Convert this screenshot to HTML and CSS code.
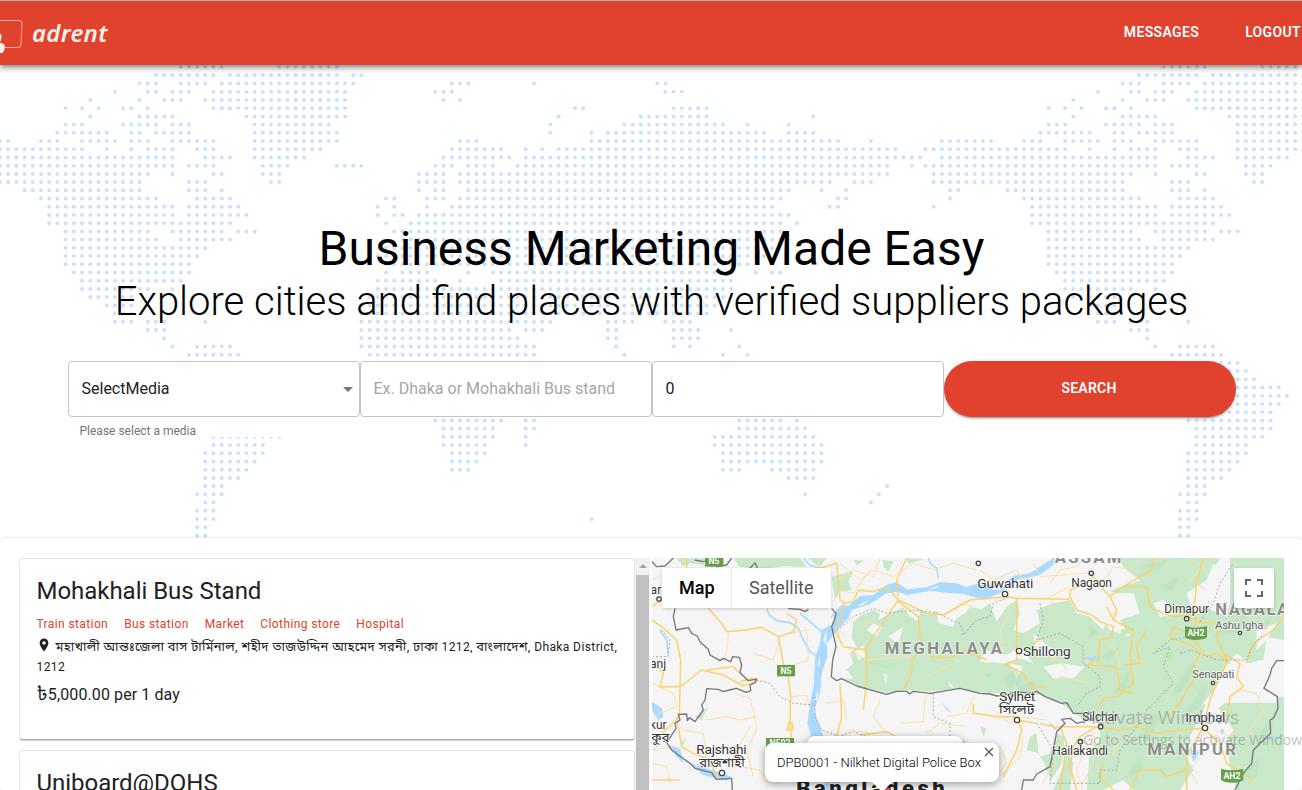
FILE: index.html
```html
<!DOCTYPE html>
<html lang="en">
<head>
<meta charset="utf-8">
<title>adrent</title>
<link rel="stylesheet" href="styles.css">
</head>
<body>
<header class="topbar">
  <div class="brand">
    <svg class="brand-icon" width="24" height="40" viewBox="0 0 24 40" fill="none">
      <path d="M-4 4.500H18.500Q22 4.500 22 7L21 29Q20.500 31.500 18 31.500H5" stroke="#fff" stroke-opacity=".55"/>
      <path d="M0 17.500Q2 19 1.500 21.500L0 27Q5 27 4.800 31Q4.500 36 2 37L-4 37V17Z" fill="#fff" fill-opacity=".93"/>
    </svg>
    <span class="brand-name">adrent</span>
  </div>
  <nav class="nav"><a>MESSAGES</a><a>LOGOUT</a></nav>
</header>

<section class="hero">
  <svg class="dots" id="dots" width="1302" height="473" viewBox="0 65 1302 473"></svg>
  <h1 class="hero-title">Business Marketing Made Easy</h1>
  <h2 class="hero-sub">Explore cities and find places with verified suppliers packages</h2>
  <form class="search">
    <div class="cell filled">
      <div class="field">SelectMedia<i class="caret"></i></div>
      <p class="helper">Please select a media</p>
    </div>
    <div class="cell"><div class="field placeholder">Ex. Dhaka or Mohakhali Bus stand</div></div>
    <div class="cell"><div class="field">0</div></div>
    <div class="cell"><div class="search-btn">SEARCH</div></div>
  </form>
</section>

<main class="results">
  <div class="list">
    <div class="cards">
      <article class="card">
        <h3 class="card-title">Mohakhali Bus Stand</h3>
        <div class="tags"><span>Train station</span><span>Bus station</span><span>Market</span><span>Clothing store</span><span>Hospital</span></div>
        <p class="address"><svg class="pin" width="14" height="14" viewBox="0 0 24 24"><path fill="#212121" d="M12 1C7.600 1 4.500 4.400 4.500 8.500C4.500 14 12 23 12 23S19.500 14 19.500 8.500C19.500 4.400 16.400 1 12 1Zm0 10.500a3 3 0 1 1 0-6a3 3 0 0 1 0 6Z"/></svg><span class="bn">মহাখালী আন্তঃজেলা বাস টার্মিনাল, শহীদ তাজউদ্দিন আহমেদ সরনী, ঢাকা</span> 1212, <span class="bn">বাংলাদেশ,</span> Dhaka District,<br>1212</p>
        <p class="price"><span class="taka">৳</span>5,000.00 per 1 day</p>
      </article>
      <article class="card"><h3 class="card-title">Uniboard@DOHS</h3></article>
    </div>
    <div class="scrollbar"><i class="up"></i><div class="thumb"></div></div>
  </div>

  <div class="map">
    <svg class="map-art" width="632" height="232" viewBox="36 24 1896 696">
      <rect x="36" y="24" width="1896" height="696" fill="#f5f5f5"/>
      <g class="green">
        <path d="M110 24H195L190 45 150 40 130 50ZM280 24H480L500 50 430 48 370 60 300 50ZM500 24H560L540 50ZM575 80L640 62 625 95 635 120 600 125 585 150Z"/>
        <path d="M728 30L760 34 745 65 730 50ZM640 30L670 32 650 48ZM798 24L850 28 805 42Z"/>
        <path d="M640 215L665 195 700 180 720 192 715 210 750 190 790 172 800 190 835 215 840 180 860 195 890 185 895 220 940 230 950 205 975 190 990 172 1025 178 1050 160 1070 215 1100 170 1130 150 1140 190 1120 240 1150 250 1200 220 1190 180 1240 160 1290 150 1310 190 1350 200 1390 240 1400 200 1360 180 1400 165 1385 135 1440 110 1480 100 1500 90 1460 60 1430 24H1740L1700 100 1690 170 1760 200 1770 160 1770 24H1932V270L1880 260 1870 330 1860 410 1880 440 1932 440V720H1790L1770 650 1760 570 1780 540 1740 480 1700 460 1650 560 1640 620 1660 660 1620 720H1480L1450 690 1390 720H1340L1345 660 1350 600 1380 570 1380 520 1330 510 1300 485 1260 460 1210 435 1170 430 1060 430 1000 425 960 414 870 424 800 420 740 428 650 405 615 388 640 385 620 360 640 340 630 310 650 290 635 265Z"/>
        <path d="M1250 550L1275 560 1265 640 1235 690 1215 650ZM1280 600L1300 640 1290 720 1240 720 1265 660Z"/>
        <path d="M165 500L205 470 185 510ZM118 580L138 565 130 585ZM1020 530L1040 535 1030 560ZM1170 560L1190 550 1195 610 1160 600ZM1200 620L1235 610 1220 650Z"/>
      </g>
      <g fill="#f5f5f5">
        <path d="M700 220L725 230 710 260 680 240ZM645 305L670 285 675 320 655 330ZM745 260L790 230 775 280ZM925 395L945 415 930 410ZM1030 300L1100 315 1140 290 1180 340 1140 325 1090 340 1020 335ZM1180 250L1225 290 1280 310 1240 320 1190 310ZM1210 350L1260 340 1300 345 1335 350 1300 385 1240 385ZM1110 340L1150 350 1130 390ZM1130 24L1420 24 1440 70 1430 110 1360 100 1290 130 1150 100 1100 90ZM1290 130L1360 110 1430 130 1480 130 1500 190 1440 210 1470 260 1410 240 1370 190 1310 170ZM1540 160L1570 150 1620 190 1560 200ZM1640 130L1700 90 1720 40 1740 60 1720 130 1700 180 1660 190ZM730 370L742 375 738 405Z"/>
        <path d="M1790 310L1830 340 1860 330 1905 330 1875 410 1910 440V458H1755L1715 490 1750 500 1735 560 1755 600 1730 660 1670 620 1690 560 1705 480 1690 460 1730 410 1760 340ZM1850 240L1910 220 1880 270 1850 300Z"/>
      </g>
      <g fill="#b9dfbc" opacity=".55">
        <path d="M1090 390L1130 350 1150 395 1110 415ZM1130 410L1180 395 1190 420 1140 430ZM1350 230L1380 250 1345 265ZM1600 420L1660 330 1670 350 1620 430ZM1500 560L1540 490 1560 500 1520 580ZM1420 430L1470 360 1460 420ZM1620 510L1700 400 1680 470ZM1380 320L1440 290 1410 330ZM1450 690L1500 620 1510 660ZM1850 560L1900 500 1890 570ZM1800 680L1860 620 1850 680ZM1500 50L1580 30 1560 60ZM1560 110L1620 80 1600 120ZM1720 260L1780 200 1830 180 1790 250ZM1850 230L1900 190 1880 240Z"/>
      </g>
      <path fill="#bdecae" d="M1555 40L1575 35 1568 58ZM1440 240L1480 235 1450 260ZM1570 310L1600 300 1590 340ZM690 335L770 350 760 358 690 342ZM1030 375L1060 365 1050 385Z"/>

      <g class="water-fill">
        <path d="M1020 98L980 112 950 100 900 96 860 112 800 118 770 97 740 104 700 135 660 138 625 168 605 165 575 195 570 225 545 240 540 280 525 325 522 400 510 460 502 520 515 565 555 572 535 515 522 480 540 430 545 370 562 320 560 280 600 232 625 205 635 180 690 162 740 130 775 125 800 135 870 122 920 128 970 132 1030 150 1080 130 1130 90 1200 75 1240 45 1246 24 1240 24 1170 70 1120 78 1080 108Z"/>
        <path d="M88 585L120 595 130 640 110 620ZM36 455L65 475 70 500 55 510 36 480ZM150 640L230 665 275 680 260 692 190 675ZM560 690L600 695 590 720 540 720ZM1330 325L1370 318 1360 335ZM1650 600L1680 605 1660 635ZM905 455L935 490 920 480ZM1740 540L1752 538 1748 556Z"/>
      </g>
      <g fill="#f5f5f5"><path d="M565 220L585 190 575 230ZM550 270L560 240 558 285ZM532 350L540 315 540 345ZM525 450L535 410 532 450ZM860 118L900 107 890 115ZM650 168L690 148 670 165ZM1050 120L1100 100 1080 120Z"/></g>
      <g class="water">
        <path d="M380 176L388 195 410 212 450 218 475 235 490 270 510 305 535 320M480 190L510 215 545 245M490 24L510 45 560 60M865 24L870 40 890 55 895 85M1620 24L1645 24M60 240L80 270 85 315M1230 520L1250 540M1880 570L1930 555" stroke-width="5"/>
      </g>

      <g class="road minor">
        <path d="M36 90L65 75 100 90M40 150L60 130M265 250L262 295 250 330M280 430L330 445 345 500 300 510 260 500 200 510M345 500L350 540 320 600 340 680M450 250L500 240 505 330 440 352M420 270L400 330 340 310M455 440L500 435 510 480M600 40L660 90 700 60 760 80 820 40 880 60 940 40 1010 60M600 120L640 130 690 60M620 510L610 450 560 460M780 520L850 515 855 440 880 430M920 500L980 490 1000 440M330 530L270 640M36 400L100 430 110 470 36 500M40 600L100 590 130 600M130 540L190 550 200 600M630 300L680 330 730 325 810 320M650 240L700 210M860 380L920 350 960 330M1380 30L1340 70 1200 80 1180 40M1480 60L1420 50 1380 110M1240 180L1230 140 1290 110M1400 280L1430 300 1440 350M1330 330L1390 350M1240 400L1260 380 1350 400M1060 480L1110 520 1140 500 1220 510M1010 600L1080 590 1100 640 1050 700M1150 560L1140 620 1100 660 1060 690M1300 560L1340 580 1310 660 1330 720M1250 560L1240 630 1210 700M1360 550L1360 640 1330 700M1430 560L1420 620M1640 24L1690 50 1650 90 1700 120M1880 240L1860 190 1900 150M1720 540L1770 560 1800 540M1800 420L1850 430 1870 480 1830 540 1840 590M1680 620L1650 660 1670 700"/>
        <path d="M490 120L520 70 540 24M590 90L640 60 700 80 720 24M615 260L600 240 590 270M36 640L80 650 90 700M300 650L360 660 380 690 420 700M600 560L630 540 690 550M720 450L700 500 740 550M860 550L900 520 980 530"/>
        <path d="M1020 60L1060 90 1130 60 1150 100M1230 100L1260 60 1310 50 1330 24M1440 190L1400 200M940 190L960 160 1000 170M1110 190L1080 240 1090 300M1210 320L1260 330 1280 360M1020 280L1060 300 1110 290"/>
      </g>
      <g class="road">
        <path d="M205 175L245 220 260 245 320 240 365 232 415 260 430 340 445 380 452 440 450 520 455 570M415 260L460 245 470 210 440 190M36 210L65 230 110 270 122 330 120 410 118 500 36 580M122 410L185 360 250 375 310 408 350 395 335 385 300 395M200 360L280 350 300 370M36 330L70 370 60 410 120 410M36 170L80 140M100 90L140 60 140 24M110 500L125 590 160 610 200 625 240 690M450 510L440 540 460 540 455 515"/>
        <path d="M520 60L590 40 600 150 615 160 640 155 655 120 700 125 740 110 775 150 720 230 680 290 680 390 670 480M610 160L590 250 610 290 680 300M775 150L860 190 910 195 990 150 1100 140 1130 145 1290 148M775 140L770 90 800 24M775 155L835 200 845 300 815 330 815 370 790 420M1130 145L1130 330 1095 345 1150 370 1175 415 1210 410M1040 330L970 300 930 325 870 320M1130 310L1170 290 1210 260M1290 140L1290 120 1340 100 1360 80 1370 95 1410 140 1430 180 1420 210 1400 170M1410 140L1450 110 1520 110 1530 170 1570 190 1600 200 1640 195 1670 215 1645 250 1700 320 1730 310 1770 340M1290 140L1310 180 1355 195 1380 215 1420 230 1415 260 1380 270 1375 330 1340 345M1420 210L1480 240 1470 320 1480 400 1430 440 1390 445 1370 480"/>
        <path d="M1345 345L1430 350 1440 420 1480 430M1540 24L1535 60 1450 110M1670 215L1660 190 1670 100 1690 24M1670 215L1730 220 1730 260 1750 310 1760 340 1730 400 1710 450 1690 530 1640 620 1640 720M1645 250L1600 230 1590 260 1660 290 1680 310 1660 350 1670 380 1640 420 1620 460 1580 500M1750 310L1800 340 1790 380 1810 410 1770 440 1760 500M1820 340L1840 280 1900 240 1932 200M1200 520L1240 530 1290 530 1370 530 1440 540 1490 530 1550 550 1620 540 1690 535 1740 580 1760 640 1840 690M1370 530L1320 560 1300 590 1290 650 1310 720M1260 530L1280 580 1260 720M1000 460L1000 490 1070 500 1130 500 1145 540 1130 600 1090 680M1130 510L1190 520M1470 720L1500 660 1560 660 1580 680 1640 660M1390 640L1380 680 1420 720M1520 240L1490 290 1500 340 1450 345M600 400L605 500 590 560M660 555L740 545 780 565M36 690L120 690"/>
      </g>

      <g class="dotted">
        <path d="M350 390L390 400 420 440 460 460 520 465M65 240L90 270 85 320 40 320M600 235L640 200 700 175 740 190 830 180 900 190 930 210 960 220 970 255 1010 210 1050 200 1060 160 1110 140M525 440L525 500 545 540 600 560 640 545 680 560M880 430L880 500 930 520 930 560 980 580M1200 160L1210 210 1190 270 1260 250 1330 290 1330 340 1380 380 1380 410 1340 430 1310 470M1190 520L1240 600 1230 700 1380 700 1380 660 1430 660 1440 600 1490 530 1520 480 1600 400 1570 350 1590 290 1540 310 1590 270 1650 260M1620 310L1650 300 1730 330 1820 330 1830 300 1870 250M1680 215L1720 160 1740 100 1780 40M40 600L80 560"/>
      </g>
      <g class="border">
        <path d="M105 175L100 200 108 240 145 233 155 250 172 258 180 275 205 298 210 315 240 332 250 325 272 335 278 320 298 322 305 345 300 368 325 392 350 387 345 398 330 405 332 422 318 427 290 415 268 420 250 425 235 418 200 416 195 450 185 465 190 480 165 515 148 503 142 512 140 492 115 493 120 510 105 520 108 535 80 578 95 600 115 615 150 640 165 655 215 668 228 688 275 685 277 720M36 35L50 50 75 48 100 24M165 30L190 35 215 28 230 50 260 45 275 24M325 60L345 38 355 60M575 175L588 190 583 210 575 230 588 290 578 330 574 380 590 392 605 386 650 408 740 433 770 424 800 424 808 432 820 424 870 430 960 415 1020 430 1050 432 1070 438 1100 435 1130 425 1170 430 1190 424 1215 440 1265 460 1280 458 1300 490 1330 490 1332 515 1310 520 1290 505 1265 508 1275 520 1250 545 1240 600 1230 650 1190 672 1180 690 1150 690 1145 720M1932 332L1910 332 1895 355 1890 375 1872 415 1912 440 1914 475 1900 505 1890 510 1892 550 1840 600 1835 640 1810 670 1785 720M445 176L480 178 495 185 505 178"/>
      </g>

      <g class="shields">
        <rect x="195" y="20" width="55" height="30"/><rect x="411" y="345" width="54" height="34"/><rect x="378" y="564" width="84" height="34"/>
        <path d="M1635 228Q1666 238 1701 228V262Q1690 270 1667 270Q1645 270 1635 262ZM1743 656Q1774 666 1810 656V690Q1800 698 1776 698Q1753 698 1743 690Z"/>
      </g>
      <g class="shield-text">
        <text x="222" y="43">N5</text><text x="438" y="372">N5</text><text x="420" y="589">N502</text><text x="1668" y="258">AH2</text><text x="1776" y="687">AH2</text>
      </g>
      <g class="region">
        <text x="734" y="312" textLength="352">MEGHALAYA</text>
        <text x="1244" y="38" textLength="200">ASSAM</text>
        <text x="1726" y="194" textLength="295">NAGALAND</text>
        <text x="1522" y="614" textLength="266">MANIPUR</text>
      </g>
      <text class="country" x="469" y="737" textLength="445">Bangladesh</text>
      <g class="places">
        <text x="1012" y="114" textLength="168">Guwahati</text><text x="1149" y="318" textLength="143">Shillong</text><text x="1078" y="453" textLength="108">Sylhet</text><text x="1636" y="515" textLength="120">Imphal</text><text x="169" y="612" textLength="151">Rajshahi</text>
      </g>
      <g class="places small">
        <text x="1294" y="111" textLength="122">Nagaon</text><text x="1573" y="189" textLength="134">Dimapur</text><text x="1327" y="513" textLength="107">Silchar</text><text x="1237" y="615" textLength="167">Hailakandi</text><text x="12" y="132">har</text><text x="10" y="355">ganj</text><text x="10" y="537">akur</text>
      </g>
      <g class="places faint">
        <text x="1725" y="236" textLength="145">Ashu Igha</text><text x="1657" y="384" textLength="126">Senapati</text>
      </g>
      <g class="places bengali">
        <text x="1077" y="493" textLength="106" lengthAdjust="spacingAndGlyphs">সিলেট</text><text x="178" y="652" textLength="136" lengthAdjust="spacingAndGlyphs">রাজশাহী</text><text x="32" y="575">কুর</text>
      </g>
      <g class="towns">
        <circle cx="1095" cy="132" r="8"/><circle cx="1137" cy="303" r="8"/><circle cx="1131" cy="510" r="8"/><circle cx="1695" cy="534" r="8"/><circle cx="246" cy="669" r="8"/><circle cx="1354" cy="70" r="6.500"/><circle cx="1640" cy="206" r="6.500"/><circle cx="1382" cy="530" r="6.500"/><circle cx="1321" cy="575" r="6.500"/><circle cx="1015" cy="40" r="6.500"/><circle cx="57" cy="147" r="6.500"/><circle cx="1800" cy="249" r="5"/><circle cx="1719" cy="399" r="5"/>
      </g>
      <path d="M732 720Q736 713 744 713Q752 713 755 720Z" fill="#e8453c"/>
    </svg>
    <div class="map-type"><b>Map</b><span>Satellite</span></div>
    <div class="fullscreen"><svg width="18" height="18" viewBox="0 0 18 18" fill="none" stroke="#666" stroke-width="2"><path d="M1 6V1H6M12 1H17V6M17 12V17H12M6 17H1V12"/></svg></div>
    <div class="info back"></div>
    <div class="info">DPB0001 - Nilkhet Digital Police Box<svg class="close" width="10" height="10" viewBox="0 0 10 10" stroke="#555" stroke-width="1.200"><path d="M1 1L9 9M9 1L1 9"/></svg><i class="tail"></i></div>
  </div>
</main>
<div class="watermark"><p>Activate Windows</p><small>Go to Settings to activate Windows.</small></div>
<script src="dots.js"></script>
</body>
</html>
```
FILE: styles.css
```css
* { box-sizing: border-box; }
body { margin: 0; height: 790px; overflow: hidden; position: relative; background: #fff; color: #212121; font-family: Roboto, "Noto Sans Bengali", sans-serif; }
h1, h2, h3, p { margin: 0; font-weight: 400; }

.topbar { position: relative; z-index: 2; display: flex; justify-content: space-between; align-items: center; width: 1302px; height: 65px; border-top: 1px solid #b1adac; background: #e1422d; box-shadow: 0 2px 4px -1px rgba(0,0,0,.3), 0 4px 5px rgba(0,0,0,.18), 0 1px 10px rgba(0,0,0,.14); }
.brand { display: flex; align-items: center; gap: 8px; color: #fff; }
.brand-icon { margin-top: 6px; }
.brand-name { font: italic 600 24px/30px "Noto Sans", sans-serif; color: #fdeeec; letter-spacing: .3px; }
.nav { display: flex; gap: 46px; padding: 0 1px 2px 0; color: #fff; font-size: 14px; font-weight: 600; letter-spacing: .35px; }

.hero { position: relative; height: 473px; padding: 156px 0 0 1px; text-align: center; color: #000; }
.dots { position: absolute; left: 0; top: 0; fill: #cde0fb; }
.hero-title { position: relative; font-size: 48px; line-height: 56px; }
.hero-sub { position: relative; margin-top: 1px; font-size: 40px; line-height: 48px; font-weight: 300; white-space: nowrap; }
.search { position: relative; display: flex; align-items: flex-start; margin: 35px 66px 0 67px; text-align: left; color: #212121; }
.cell { width: 292px; }
.filled { background: #fff; height: 76px; }
.field { position: relative; display: flex; align-items: center; height: 56px; padding: 0 12.5px 2px; border: 1px solid #c4c4c4; border-radius: 4px; background: #fff; font-size: 16px; }
.placeholder { color: #a6a6a6; }
.caret { margin: 2px -6.5px 0 auto; border: 5px solid transparent; border-top-color: #757575; border-bottom: 0; }
.helper { padding: 5px 11.5px 0; font-size: 12px; line-height: 18px; color: #757575; }
.search-btn { display: flex; align-items: center; justify-content: center; height: 56px; padding-bottom: 2px; border-radius: 28px; background: #e1422d; color: #fff; font-size: 14px; font-weight: 600; letter-spacing: .25px; padding-right: 2px; box-shadow: 0 3px 1px -2px rgba(0,0,0,.2), 0 2px 2px rgba(0,0,0,.14), 0 1px 5px rgba(0,0,0,.12); }

.results { position: relative; display: flex; gap: 2px; height: 252px; padding: 20px 18px 0 19px; border-radius: 4px; background: #fff; box-shadow: 0 0 3px rgba(0,0,0,.2); overflow: hidden; }
.list { display: flex; width: 631px; height: 232px; overflow: hidden; }
.cards { display: flex; flex-direction: column; gap: 10px; width: 616px; }
.card { flex: none; height: 182px; padding: 16px 16.5px; border: 1px solid #e4e4e4; border-bottom-color: #aaa; border-radius: 4px; background: #fff; box-shadow: 0 1px 1px rgba(0,0,0,.18); }
.card-title { font-size: 24px; line-height: 32px; letter-spacing: -.03px; }
.tags { display: flex; gap: 16px; margin-top: 7px; font-size: 12px; line-height: 20px; letter-spacing: .39px; color: #e1422d; }
.address { font-size: 12px; line-height: 19.5px; letter-spacing: .4px; margin-top: 4px; white-space: nowrap; }
.bn { font-size: 12.9px; letter-spacing: .36px; line-height: 1; }
.pin { margin-right: 5px; vertical-align: -1px; }
.price { margin-top: 6px; font-size: 16px; line-height: 24px; letter-spacing: .1px; }
.taka { font-size: 19px; line-height: 1; }
.scrollbar { display: flex; flex-direction: column; align-items: center; width: 15px; background: #f1f1f1; padding-top: 6px; }
.up { border: 4px solid transparent; border-bottom-color: #a3a3a3; border-top: 0; }
.thumb { width: 13px; height: 220px; margin-top: 7px; background: #c1c1c1; }

.map { position: relative; width: 632px; height: 232px; overflow: hidden; }
.map-art { display: block; }
.green { fill: #c8e8c9; }
.water-fill { fill: #aadaff; }
.water { fill: none; stroke: #aadaff; }
.road { fill: none; stroke: #fbd270; stroke-width: 4.5; stroke-linejoin: round; }
.road.minor { stroke: #fbe2a2; stroke-width: 3; }
.border { fill: none; stroke: #777; stroke-width: 4; stroke-linejoin: round; }
.dotted { fill: none; stroke: #aaa; stroke-width: 3; stroke-dasharray: 6 6; }
.shields { fill: #689f4b; }
.shield-text { fill: #fff; font: 700 26px Roboto, sans-serif; text-anchor: middle; }
.region { fill: #8d8d8d; stroke: #fff; stroke-opacity: .7; stroke-width: 5; paint-order: stroke; font: 700 50px Roboto, sans-serif; }
.country { fill: #222; stroke: #fff; stroke-width: 5; paint-order: stroke; font: 900 66px Roboto, sans-serif; }
.places { fill: #333; stroke: #fff; stroke-opacity: .8; stroke-width: 5; paint-order: stroke; font: 400 41px Roboto, sans-serif; }
.places.small { font-size: 36px; }
.places.faint { font-size: 34px; fill: #606060; }
.places.bengali { font: 400 40px "Noto Sans Bengali", sans-serif; }
.towns { fill: #fff; stroke: #444; stroke-width: 4; }
.map-type { position: absolute; left: 10px; top: 10px; display: flex; height: 40px; background: #fff; box-shadow: 0 1px 4px -1px rgba(0,0,0,.3); font-size: 18px; line-height: 40px; color: #565656; }
.map-type b { width: 70px; padding-left: 17px; border-right: 1px solid #e6e6e6; font-weight: 500; color: #000; }
.map-type span { width: 99px; padding-left: 17px; }
.fullscreen { position: absolute; left: 582px; top: 10px; display: flex; align-items: center; justify-content: center; width: 40px; height: 40px; border-radius: 2px; background: #fff; box-shadow: 0 1px 4px -1px rgba(0,0,0,.3); }
.info { position: absolute; left: 113px; top: 185px; width: 234px; height: 39px; padding-left: 12px; border-radius: 8px; background: #fff; box-shadow: 0 2px 7px 1px rgba(0,0,0,.3); color: #000; font-size: 13px; font-weight: 300; line-height: 39px; white-space: nowrap; }
.info.back { left: 155px; top: 178px; width: 156px; }
.close { position: absolute; right: 5px; top: 4px; }
.tail { position: absolute; left: 107px; top: 39px; border: 10px solid transparent; border-top-color: #fff; border-bottom: 0; }

.watermark { position: absolute; left: 1083px; top: 704px; width: 219px; overflow: hidden; white-space: nowrap; color: rgba(130,130,130,.5); font-family: "Open Sans", sans-serif; }
.watermark p { font-size: 19px; line-height: 26px; }
.watermark small { display: block; font-size: 14px; line-height: 20px; }
```
FILE: dots.js
```js
// World map as runs of dots: each row lists "start-end" column ranges.
const rows = [
  "22-27 34-41", "19-26 28-41 43-44", "17-19 22-25 27-43 55-57 65 80-81",
  "14 18-19 21-23 26-42 53-55 81-83", "11 17 20-22 25-42 54 56",
  "8 10 12 15-16 18 26-42 70-71 82-86", "11 17-21 30-42 68 78-86 99",
  "8-10 15-19 21-23 31-40 67 76-88 91 96", "7-13 16-17 19-23 31-41 67 72 74-93 96-99",
  "-5-1 5-7 10-14 16-18 21-26 31-41 56-58 72-102 106",
  "-7-10 13 16 18-21 24-26 31-39 55-61 64 66 68-71 72-109",
  "-5-21 25-28 31-37 54-62 64-112", "-7-21 23-26 32-35 41-44 53-55 57-60 63-108 111",
  "-6-18 21 26-27 32-34 51-54 56-108", "-6-17 23-25 33-34 51-54 56-101 104-106",
  "-4--3 3-17 23-25 27 51 53-54 57-96 100 103", "-4 5-19 24-28 47-48 52-54 56-95 102-103",
  "-6 6-21 23-29 46 48 52 55-94 101-102", "6-21 23-30 46 48-49 51-96", "6-28 47 50-95 97",
  "8-18 21-27 29-31 48-95", "8-19 22-28 49-95", "8-25 47-94", "8-24 46-93", "8-23 47-91",
  "9-23 47 49-52 57 60-89 92 94-95", "10-22 46-53 56 61-89", "10-18 21 46-89", "11-16 45-88",
  "13-16 44-87", "14-16 44-86", "14-16 18-20 25 44-67 74-77 81-84",
  "18-20 44-62 64-66 74-75 82-85 89", "20 44-63 74-75 82-85",
  "21 24-28 44-65 75 82 84 90", "23-29 45-65 76 88 91", "23-31", "24-32", "24-33", "24-36",
  "23-37", "24-36", "24-35", "25-35 53-61 64-65 90-95 97", "26-35 54-60 64-65 90-98",
  "26-34 54-60 64 87-99", "26-32 54-59 64 87-100", "25-32 55-59 88-100", "25-31 55-58 88-100",
  "25-30 55-57 88-90 94-99", "25-29 96-99", "25-27 108", "24-27 98 107", "25-26 106",
  "24-26", "24-26 72", "24-25", "24-25"
];
const pitch = 8.216, tile = 983;
let dots = "";
rows.forEach((row, r) => {
  for (const run of row.split(" ")) {
    const m = run.match(/^(-?\d+)(?:-(-?\d+))?$/);
    const end = m[2] === undefined ? +m[1] : +m[2];
    for (let c = +m[1]; c <= end; c++) {
      for (const off of [0, tile]) {
        const x = c * pitch - 0.1 + off;
        if (x > -3 && x < 1305) dots += `<circle cx="${x.toFixed(1)}" cy="${(67.1 + r * pitch).toFixed(1)}" r="2"/>`;
      }
    }
  }
});
document.getElementById("dots").innerHTML = dots;
```
